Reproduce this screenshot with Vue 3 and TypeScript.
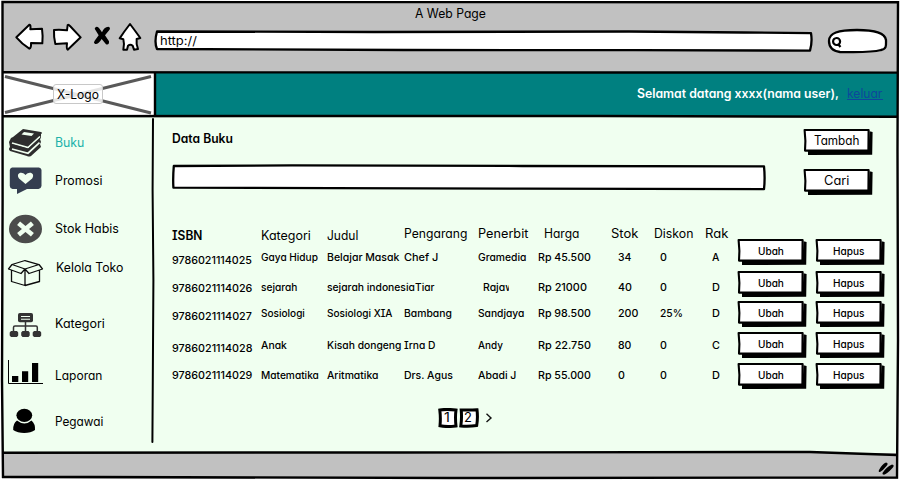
<script setup lang="ts">
import { h } from 'vue'

// A text run set to a fixed visual width, baseline 12px below its top.
const Label = (props: { text: string; w: number }) =>
  h('svg', { class: 'label', width: props.w, height: 16 }, [
    h('text', { x: 0, y: 12, textLength: props.w + 0.9, lengthAdjust: 'spacingAndGlyphs' }, props.text),
  ])
Label.props = ['text', 'w']

const SketchButton = (props: { text: string; w: number }) =>
  h('button', { class: 'sketch-button', type: 'button' }, [
    h('svg', { class: 'button-shape', viewBox: '0 0 69 26' }, [
      h('path', { d: 'M4 21L64.5 21L65.5 2.2L68.6 3L68.2 25.8L4 26Z' }),
      h('path', { class: 'face', d: 'M.6 1L64.6 1L64.4 21.6L1 21.6L1.4 12Z' }),
    ]),
    h(Label, { text: props.text, w: props.w }),
  ])
SketchButton.props = ['text', 'w']

type Cell = [string, number]
interface MenuItem { id: string; label: Cell; top: number; height: number; pad: number }
interface Row { id: string; height: number; pad: number; isbn: Cell; isbnPad: number; cells: Cell[] }

const menu: MenuItem[] = [
  { id: 'buku', label: ['Buku', 28.5], top: 117, height: 45, pad: 18 },
  { id: 'promosi', label: ['Promosi', 46.5], top: 162, height: 43, pad: 11 },
  { id: 'stok', label: ['Stok Habis', 63], top: 205, height: 50, pad: 16 },
  { id: 'toko', label: ['Kelola Toko', 66.5], top: 255, height: 45, pad: 5 },
  { id: 'kategori', label: ['Kategori', 49], top: 300, height: 50, pad: 16 },
  { id: 'laporan', label: ['Laporan', 46.5], top: 350, height: 50, pad: 18 },
  { id: 'pegawai', label: ['Pegawai', 47.5], top: 400, height: 50, pad: 14 },
]

const heads: Cell[] = [
  ['ISBN', 29.5], ['Kategori', 49], ['Judul', 30.5], ['Pengarang', 62.5], ['Penerbit', 49.5],
  ['Harga', 34.5], ['Stok', 26.5], ['Diskon', 38.5], ['Rak', 22.5],
]

const rows: Row[] = [
  { id: 'r1', height: 32, pad: 10, isbn: ['9786021114025', 79], isbnPad: 13,
    cells: [['Gaya Hidup', 56], ['Belajar Masak', 71.5], ['Chef J', 33.5], ['Gramedia', 47.5], ['Rp 45.500', 52], ['34', 12.5], ['0', 6], ['A', 6.5]] },
  { id: 'r2', height: 30, pad: 8, isbn: ['9786021114026', 79.5], isbnPad: 9,
    cells: [['sejarah', 35.5], ['sejarah indonesia', 87], ['Tiar', 18.5], ['Rajaw', 30], ['Rp 21000', 48], ['40', 13], ['0', 6], ['D', 7]] },
  { id: 'r3', height: 31, pad: 4, isbn: ['9786021114027', 79], isbnPad: 7,
    cells: [['Sosiologi', 43], ['Sosiologi XIA', 64.5], ['Bambang', 47], ['Sandjaya', 45.5], ['Rp 98.500', 52], ['200', 19.5], ['25%', 22], ['D', 7]] },
  { id: 'r4', height: 31, pad: 5, isbn: ['9786021114028', 79.5], isbnPad: 8,
    cells: [['Anak', 25], ['Kisah dongeng', 73.5], ['Irna D', 30.5], ['Andy', 24], ['Rp 22.750', 52], ['80', 12.5], ['0', 6], ['C', 7]] },
  { id: 'r5', height: 31, pad: 4, isbn: ['9786021114029', 79.5], isbnPad: 4,
    cells: [['Matematika', 57], ['Aritmatika', 50.5], ['Drs. Agus', 48], ['Abadi J', 37.5], ['Rp 55.000', 52], ['0', 6], ['0', 6], ['D', 7]] },
]
</script>

<template>
  <div class="page">
    <header class="chrome">
      <div class="title"><Label text="A Web Page" :w="70" /></div>
      <div class="toolbar">
        <svg class="nav" viewBox="0 60 460 108">
          <g class="ink">
            <path d="M49 112L88 74Q93 73 91 88L126 86Q129 106 127 130L93 129Q94 144 88 146Q66 132 49 112Z" />
            <path d="M162 90Q180 88 201 91L203 75Q206 73 210 78L242 112L203 149Q199 147 201 130L166 132Q161 112 162 90Z" />
            <path d="M390 72Q402 88 421 114L410 117Q408 130 414 147L402 149L398 137Q391 131 384 137L381 149L370 149Q374 132 370 118L359 115Q373 94 390 72Z" />
          </g>
          <path d="M284 86Q288 76 297 84L306 97Q312 81 325 80Q333 82 328 90L315 106L327 124Q328 136 318 133L305 117Q295 134 285 132Q279 127 284 122L296 106Z" />
        </svg>
        <div class="url">
          <svg class="shape" viewBox="0 0 660 22">
            <path class="ink" d="M3 1.5L220 2L475 1.5L590 2.5L657 3.2Q658.5 12 656 20.6L480 20.2L250 20L3 19Q0 12 3 1.5Z" />
          </svg>
          <Label text="http://" :w="36" />
        </div>
        <svg class="search" viewBox="826 28 63 26">
          <path class="ink" d="M829 41C829 33 838 30 857 30C873 30 885 32 886 40C886 45 887 49 881 50C870 53 852 52 840 52C833 51 829 47 829 41Z" />
          <path class="lens" d="M836.5 38A3.4 3.4 0 1 0 836.7 45A3.4 3.4 0 1 0 836.5 38M838 44L840.5 47" />
        </svg>
      </div>
    </header>

    <section class="banner">
      <div class="logo">
        <svg class="shape" viewBox="0 0 155 44"><path d="M5 4.5L151 41M5 40.5L151 4.5" /></svg>
        <div class="logo-name"><Label text="X-Logo" :w="41" /></div>
      </div>
      <div class="greeting">
        <Label text="Selamat datang xxxx(nama user)," :w="201" />
        <a class="logout"><Label text="keluar" :w="34.5" /></a>
      </div>
    </section>

    <div class="body">
      <nav class="sidebar">
        <div v-for="m in menu" :key="m.id" class="item" :class="m.id">
          <svg class="icon" :viewBox="`0 ${m.top} 50 ${m.height}`" :height="m.height" width="50">
            <template v-if="m.id === 'buku'">
              <path fill="#2d2d2d" d="M23 129L41 132Q43 133 41 134L41 138L40 139L41 142L40 144L41 147L31 156Q29 157 27 156L10 151Q8 149 10 147L9 142L11 138L13 137Z" />
              <path fill="none" stroke="#f0fff0" stroke-width="1.7" d="M12 143L28 147.6L40 136.5M12 149L28 153.2L39.5 142.7" />
              <path fill="none" stroke="#2d2d2d" stroke-width=".8" d="M12 144.6L28 149L40 138.3" />
              <path fill="#f0fff0" d="M24 132L34 133.5L31.5 136L21.5 134.4Z" />
            </template>
            <template v-else-if="m.id === 'promosi'">
              <path fill="#343e50" d="M12 167.5H39Q41.5 168 41.5 170V186Q41 188.7 38.5 189H27L17 194V189H12.5Q9.8 188.5 9.8 186V170Q10 168 12 167.5Z" />
              <path fill="#f0fff0" d="M25.5 184L19 178.5C15.5 173.5 21.5 170.5 25.5 175C29.5 170.5 35.5 173.5 32.2 178.5Z" />
            </template>
            <template v-else-if="m.id === 'stok'">
              <ellipse cx="25.5" cy="229" rx="16.5" ry="14.3" fill="#4b4b4b" />
              <path stroke="#f0fff0" stroke-width="4.6" d="M18.6 223.2L32.4 234.8M32.4 223.2L18.6 234.8" />
            </template>
            <g v-else-if="m.id === 'toko'" fill="none" stroke="#0c0c0c" stroke-width="1.3" stroke-linejoin="round">
              <path d="M12 264.5L25 260.5L39 264.5L25 269ZM12 264.5L8.5 269L21 273.5L25 269L29 273.5L42.5 269L39 264.5M11.5 270V281.5L25 285.5L39.5 281.5V270M25 269V285.5" />
            </g>
            <template v-else-if="m.id === 'kategori'">
              <rect x="18" y="313" width="15" height="9.3" rx="1.8" fill="#333" />
              <path stroke="#f0fff0" stroke-width="1.1" d="M21 316.5H30M21 319.3H30" />
              <path fill="none" stroke="#333" stroke-width="1.5" d="M25.5 322V331M13.5 331V327.5Q13.5 326 15 326H36Q37.3 326 37.3 327.5V331" />
              <path fill="#333" d="M11 331h6l1.2 1.5v3l-1.2 1.5h-6l-1.3-1.5v-3zM22.5 331h6l1.2 1.5v3l-1.2 1.5h-6l-1.3-1.5v-3zM34 331h6l1.2 1.5v3l-1.2 1.5h-6l-1.3-1.5v-3z" />
            </template>
            <template v-else-if="m.id === 'laporan'">
              <path d="M12 376h6.3v6H12zM22 371.3h6.2V382H22zM32 363h6.2v19H32z" />
              <path fill="none" stroke="#000" d="M8.5 360V383.5H43" />
            </template>
            <template v-else>
              <ellipse cx="24.3" cy="415.3" rx="7.9" ry="6.6" />
              <path d="M17 420.5Q24.5 426.5 31.5 420.5Q35.5 424 35 430C30 434 18.5 434 13.2 430Q12.8 423.5 17 420.5Z" />
            </template>
          </svg>
          <div class="item-text" :style="{ paddingTop: m.pad + 'px' }"><Label :text="m.label[0]" :w="m.label[1]" /></div>
        </div>
      </nav>

      <main class="content">
        <div class="top">
          <div class="fields">
            <h1><Label text="Data Buku" :w="60" /></h1>
            <svg class="input" viewBox="0 0 595 27">
              <path class="ink" d="M1.8 2L120 1.4L350 2L592 2.4Q593.2 14 592 25.2L350 24.6L160 24.2L1.4 23.6Q.8 14 1.8 2Z" />
            </svg>
          </div>
          <div class="actions">
            <SketchButton text="Tambah" :w="44.5" />
            <SketchButton text="Cari" :w="24.5" />
          </div>
        </div>

        <div class="heads">
          <Label v-for="c in heads" :key="c[0]" :text="c[0]" :w="c[1]" />
        </div>
        <div v-for="r in rows" :key="r.id" class="row" :class="r.id" :style="{ height: r.height + 'px' }">
          <div class="cell isbn" :style="{ paddingTop: r.isbnPad + 'px' }"><Label :text="r.isbn[0]" :w="r.isbn[1]" /></div>
          <div v-for="(c, i) in r.cells" :key="i" class="cell" :class="'c' + i" :style="{ paddingTop: r.pad + 'px' }">
            <Label :text="c[0]" :w="c[1]" />
          </div>
          <SketchButton text="Ubah" :w="25" />
          <SketchButton text="Hapus" :w="30.5" />
        </div>

        <div class="pager">
          <span class="num"><svg class="shape" viewBox="0 0 20 20"><path d="M1.8 2Q8 .8 18 2Q17 9 18 18Q9 19.2 2 17.8Q2.8 10 1.8 2Z" /></svg><Label text="1" :w="5" /></span>
          <span class="num"><svg class="shape" viewBox="0 0 20 20"><path d="M2.2 2Q12 2.2 18 1.8Q19 10 17.7 17.5Q10 18.8 1.8 18Q3 10 2.2 2Z" /></svg><Label text="2" :w="7" /></span>
          <svg class="next" viewBox="0 0 8 12"><path d="M1.5 1.8L6 5.9L1.5 10" /></svg>
        </div>
      </main>
    </div>

    <footer class="footer">
      <svg class="grip" viewBox="0 0 18 15">
        <path d="M1 9Q4 3 8 1.5Q11 2 8.5 5Q5 9.5 2 11Q0 11 1 9ZM4.5 12Q8 6 14 3.4Q17.4 4 14 7.5Q9 13 6 13.7Q4 13.5 4.5 12Z" />
      </svg>
    </footer>

    <svg class="frame" viewBox="0 0 900 480">
      <path class="edge" d="M0 0H900V480H0Z M2 2V479H898V2Z" />
      <path d="M2.5 72.2L300 72.4L898 72.6M2.5 116.2L300 116L600 116L898 116.8M155 73V116M2.5 452.7L400 452.5L810 452L897 455" />
      <path d="M2.5 2L898 2.3L897.5 150L898 340L897 477.5L450 478L180 477.2L3 476.8L2 380L2.6 200Z" />
      <path class="rule" d="M153 119L152.6 190L153.4 280L152.8 380L152.4 442" />
    </svg>
  </div>
</template>

<style>
body { overflow: hidden; }
.label { display: block; flex: none; overflow: visible; fill: currentColor; }
.sketch-button { position: relative; box-sizing: border-box; width: 69px; height: 26px; padding: 4px 4px 0 0; border: 0; background: none; display: flex; justify-content: center; align-items: flex-start; color: #000; font: inherit; }
.button-shape { position: absolute; left: 0; top: 0; width: 69px; height: 26px; overflow: visible; }
.button-shape .face { fill: #fff; stroke: #000; stroke-width: 2.1; stroke-linejoin: round; }
.sketch-button .label { position: relative; }
</style>

<style scoped>
.page { position: relative; width: 900px; height: 480px; display: flex; flex-direction: column; overflow: hidden; background: #f0fff0; color: #000; font-family: Inter, "Liberation Sans", sans-serif; font-size: 12.5px; font-weight: 430; font-feature-settings: "cv11", "cv08"; }
.ink { fill: #fff; stroke: #000; stroke-width: 2.3; stroke-linejoin: round; }
.shape { position: absolute; left: 0; top: 0; width: 100%; height: 100%; }
.chrome { height: 72px; background: #c1c1c1; }
.title { display: flex; justify-content: center; padding-top: 6px; height: 18px; }
.toolbar { display: flex; }
.nav { width: 153.33px; height: 36px; margin-top: -4px; }
.nav .ink { stroke-width: 6; }
.url { position: relative; width: 660px; height: 22px; margin: 6px 0 0 .2px; padding: 3px 0 0 6.5px; box-sizing: border-box; font-size: 12px; }
.url .label { position: relative; }
.search { width: 63px; height: 26px; margin: 4px 0 0 12.5px; }
.lens { fill: none; stroke: #000; stroke-width: 2.2; }
.banner { height: 44px; display: flex; background: #008080; }
.logo { position: relative; width: 155px; background: #fff; display: flex; align-items: center; justify-content: center; }
.logo .shape path { stroke: #595959; stroke-width: 2.9; fill: none; }
.logo-name { position: relative; box-sizing: border-box; width: 50px; height: 20px; margin-left: 1px; border: 1px solid #c8c8c8; border-radius: 3px; background: rgba(255, 255, 255, .84); padding: 2px 3px; }
.greeting { flex: 1; display: flex; justify-content: flex-end; padding: 14px 17px 0 0; gap: 9px; color: #fff; font-weight: 600; }
.logout { width: 36px; height: 13px; border-bottom: 1px solid #0d479c; color: #0d479c; font-weight: 430; }
.body { height: 337px; display: flex; padding-top: 1px; box-sizing: border-box; }
.sidebar { width: 153px; }
.item { display: flex; }
.icon { flex: none; }
.item-text { padding-left: 5px; }
.toko .item-text { padding-left: 6px; }
.buku { color: #20b2aa; }
.content { width: 747px; box-sizing: border-box; padding: 12px 0 0 19px; }
.top { display: flex; height: 97px; }
.fields { width: 632px; }
h1 { margin: 0; padding-top: 2px; font-size: 12.5px; font-weight: 600; }
.input { display: block; width: 595px; height: 27px; margin-top: 17px; }
.actions { display: flex; flex-direction: column; gap: 14px; }
.heads { display: grid; grid-template-columns: 89px 66px 77px 74px 66px 67px 43px 51px 30px; height: 13px; }
.heads .label:nth-child(-n+3) { margin-top: 2px; }
.heads .label:first-child { font-weight: 600; }
.row { display: grid; grid-template-columns: 89px 66px 77px 74px 60px 80px 42px 52px 26px 78px 69px; font-size: 10.3px; font-weight: 470; }
.r2 .c2 { padding-left: 11px; }
.r2 .c3 { padding-left: 5px; width: 26px; overflow: hidden; height: 16px; }
.pager { display: flex; align-items: center; padding: 14px 0 0 266px; }
.num { position: relative; width: 20px; height: 20px; margin-right: 1px; display: flex; justify-content: center; padding-top: 2px; box-sizing: border-box; }
.num path { fill: #fff; stroke: #000; stroke-width: 3; }
.num .label { position: relative; margin-right: 4px; }
.next { width: 8px; height: 12px; margin-left: 4.5px; }
.next path { fill: none; stroke: #111; stroke-width: 1.4; }
.footer { flex: 1; background: #c1c1c1; display: flex; justify-content: flex-end; padding: 8px 4px 0 0; }
.grip { width: 18px; height: 15px; }
.frame { position: absolute; inset: 0; width: 900px; height: 480px; pointer-events: none; }
.frame path { fill: none; stroke: #000; stroke-width: 2.4; }
.frame .edge { fill: #fff; fill-rule: evenodd; stroke: none; }
.frame .rule { stroke-width: 2; stroke-linecap: round; }
</style>
